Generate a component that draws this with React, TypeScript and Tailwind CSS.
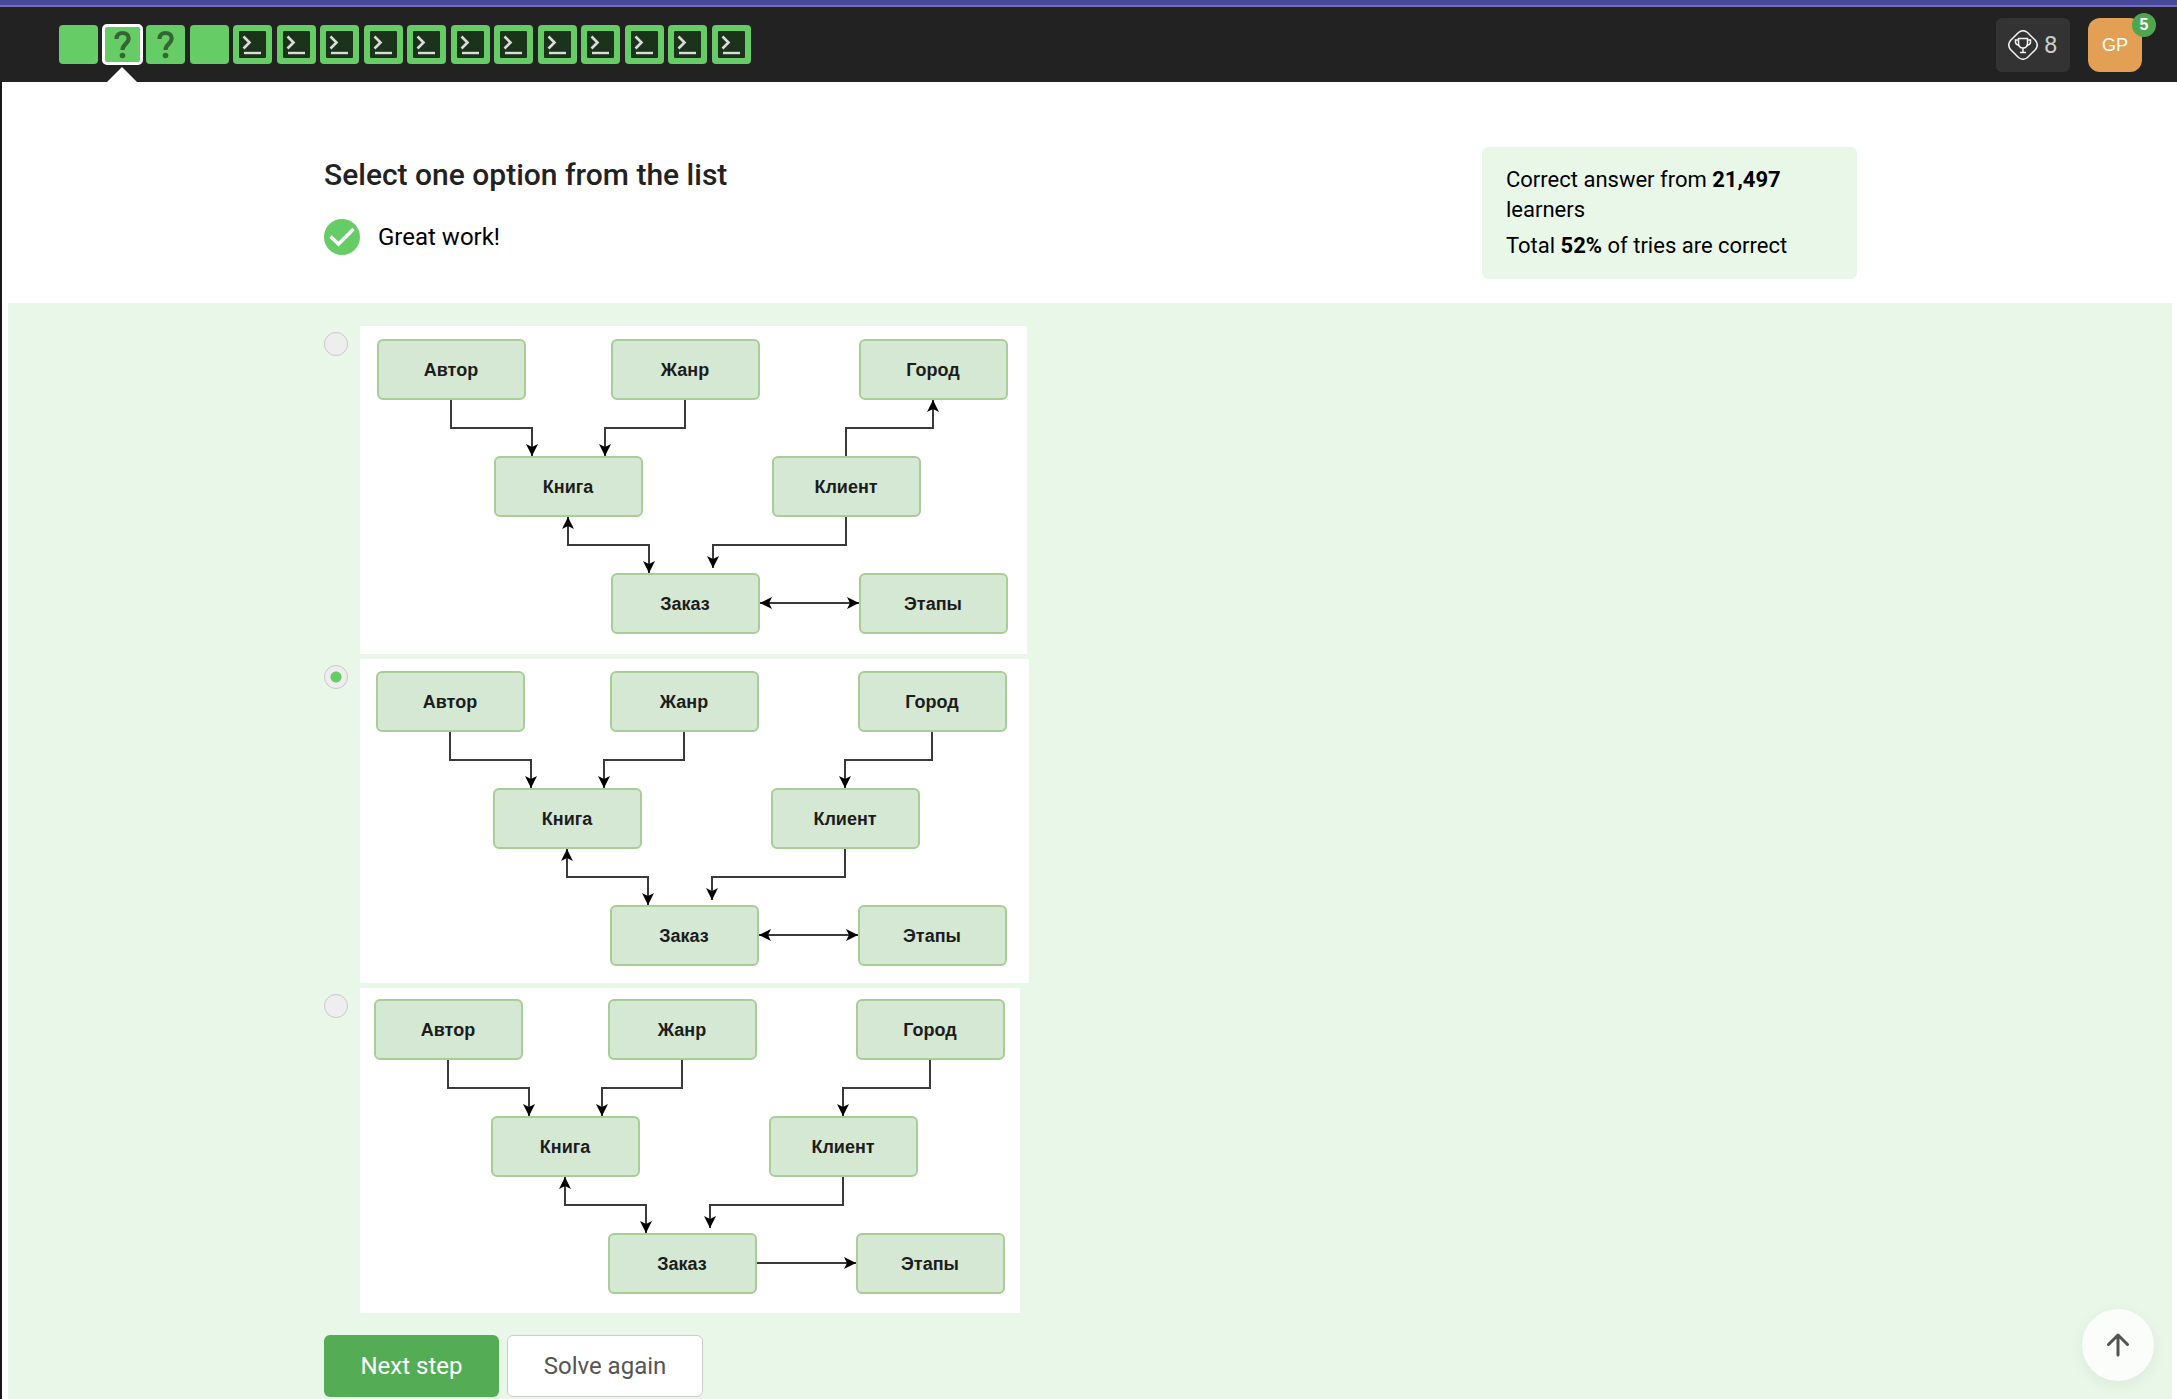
type StepKind = "text" | "quiz" | "code";

const steps: StepKind[] = [
  "text", "quiz", "quiz", "text",
  "code", "code", "code", "code", "code", "code",
  "code", "code", "code", "code", "code", "code",
];

const labels: Record<StepKind, string> = {
  text: "Theory step",
  quiz: "Quiz step",
  code: "Coding step",
};

function QuizIcon() {
  return (
    <svg viewBox="0 0 39 39" className="size-[39px] shrink-0" fill="none" aria-hidden="true">
      <path
        d="M13.5 14 C13.5 10 16 8 19.5 8 C23.5 8 25.7 10.2 25.7 13.5 C25.7 18.5 19.5 19 19.5 25"
        stroke="#336633"
        strokeWidth="4.2"
      />
      <circle cx="19.5" cy="30.5" r="2.8" fill="#336633" />
    </svg>
  );
}

function CodeIcon() {
  return (
    <svg viewBox="0 0 27 27" className="size-[27px]" fill="none" aria-hidden="true">
      <rect width="27" height="27" rx="1" fill="#1c331b" />
      <path d="M4.5 5.5 L10.5 11.5 L4.5 17.5" stroke="#dcdcdc" strokeWidth="2.6" />
      <path d="M5 22 H22" stroke="#dcdcdc" strokeWidth="2.4" />
    </svg>
  );
}

function Step({ kind, active, index }: { kind: StepKind; active: boolean; index: number }) {
  return (
    <a
      href={`#step-${index + 1}`}
      aria-label={`${labels[kind]} ${index + 1}`}
      aria-current={active ? "step" : undefined}
      className={
        active
          ? "relative flex size-[39px] items-center justify-center rounded bg-[#66cc66] outline-3 -outline-offset-2 outline-white"
          : "relative flex size-[39px] items-center justify-center rounded bg-[#66cc66]"
      }
    >
      {kind === "quiz" && <QuizIcon />}
      {kind === "code" && <CodeIcon />}
      {active && (
        <svg
          viewBox="0 0 30 15"
          className="absolute top-[42px] left-1/2 h-[15px] w-[30px] -translate-x-1/2"
          aria-hidden="true"
        >
          <path d="M0 15 L15 0 L30 15 Z" fill="#fff" />
        </svg>
      )}
    </a>
  );
}

type Diagram = {
  id: string;
  width: number;
  height: number;
  x: number;
  y: number;
  cityToClient: boolean;
  twoWayStages: boolean;
  description: string;
};

const diagrams: Diagram[] = [
  { id: "a", width: 667, height: 328, x: 18, y: 14, cityToClient: false, twoWayStages: true, description: "Клиент → Город, Заказ ↔ Этапы" },
  { id: "b", width: 669, height: 324, x: 17, y: 13, cityToClient: true, twoWayStages: true, description: "Город → Клиент, Заказ ↔ Этапы" },
  { id: "c", width: 660, height: 325, x: 15, y: 12, cityToClient: true, twoWayStages: false, description: "Город → Клиент, Заказ → Этапы" },
];

const nodes = [
  { label: "Автор", x: 0, y: 0 },
  { label: "Жанр", x: 234, y: 0 },
  { label: "Город", x: 482, y: 0 },
  { label: "Книга", x: 117, y: 117 },
  { label: "Клиент", x: 395, y: 117 },
  { label: "Заказ", x: 234, y: 234 },
  { label: "Этапы", x: 482, y: 234 },
];

function EntityDiagram({ d }: { d: Diagram }) {
  const head = `arrow-${d.id}`;
  const end = `url(#${head})`;
  return (
    <svg
      width={d.width}
      height={d.height}
      viewBox={`0 0 ${d.width} ${d.height}`}
      className="block bg-white"
      role="img"
      aria-label={d.description}
    >
      <defs>
        <marker
          id={head}
          viewBox="0 0 12 12"
          refX="12"
          refY="6"
          markerWidth="12"
          markerHeight="12"
          markerUnits="userSpaceOnUse"
          orient="auto-start-reverse"
        >
          <path d="M12 6 L0 0 L3 6 L0 12 Z" fill="#000" />
        </marker>
      </defs>
      <g transform={`translate(${d.x} ${d.y})`}>
        {nodes.map((n) => (
          <g key={n.label}>
            <rect x={n.x} y={n.y} width="147" height="59" rx="5" fill="#d5e8d4" stroke="#a9cd96" strokeWidth="2" />
            <text
              x={n.x + 73}
              y={n.y + 36}
              textAnchor="middle"
              fill="#1c1c1c"
              className="font-['Liberation_Sans',Arial,sans-serif] text-[18px] font-bold"
            >
              {n.label}
            </text>
          </g>
        ))}
        <g fill="none" stroke="#3a3a3a" strokeWidth="2">
          <path d="M73 60 V88 H154 V116" markerEnd={end} />
          <path d="M307 60 V88 H227 V116" markerEnd={end} />
          {d.cityToClient ? (
            <path d="M555 60 V88 H468 V116" markerEnd={end} />
          ) : (
            <path d="M468 116 V88 H555 V60" markerEnd={end} />
          )}
          <path d="M190 177 V205 H271 V233" markerStart={end} markerEnd={end} />
          <path d="M468 177 V205 H335 V228" markerEnd={end} />
          <path d="M382 263 H481" markerStart={d.twoWayStages ? end : undefined} markerEnd={end} />
        </g>
      </g>
    </svg>
  );
}

function TrophyIcon() {
  return (
    <svg viewBox="0 0 30 30" className="size-[30px]" fill="none" stroke="#f4f4f4" aria-hidden="true">
      <path
        d="M10.5 2.5 Q15 -1 19.5 2.5 L27.5 10.5 Q31 15 27.5 19.5 L19.5 27.5 Q15 31 10.5 27.5 L2.5 19.5 Q-1 15 2.5 10.5 Z"
        strokeWidth="1.5"
      />
      <path
        d="M10.5 8.5 H19.5 V13 C19.5 16.5 17.5 18 15 18 C12.5 18 10.5 16.5 10.5 13 Z M10.5 10 H7.5 V12 C7.5 14 9 15 11 15.5 M19.5 10 H22.5 V12 C22.5 14 21 15 19 15.5 M15 18 V22 M12 22.5 H18"
        strokeWidth="1.5"
      />
    </svg>
  );
}

export default function App() {
  return (
    <div className="flex min-h-screen flex-col bg-white font-[Roboto,sans-serif] text-black">
      <header className="border-t-[5px] border-[#49499b] bg-[#222222]">
        <div className="flex h-[77px] items-start border-t-2 border-[#7270b4] pr-[35px] pl-[59px]">
          <nav aria-label="Lesson steps" className="mt-[18px] flex w-[692px] justify-between">
            {steps.map((kind, i) => (
              <Step key={i} kind={kind} index={i} active={i === 1} />
            ))}
          </nav>
          <div className="mt-[11px] ml-auto flex gap-[18px]">
            <button type="button" className="flex h-[54px] w-[74px] items-center gap-1.5 rounded-md bg-[#333333] pl-3 text-2xl text-[#cccccc]">
              <TrophyIcon />
              8
            </button>
            <button type="button" className="relative size-[54px] rounded-xl bg-[#e39f54] font-['Liberation_Sans',Arial,sans-serif] text-lg text-white">
              GP
              <span className="absolute -top-[5px] -right-[14px] flex size-6 items-center justify-center rounded-full bg-[#4fa64f] text-base font-bold">
                5
              </span>
            </button>
          </div>
        </div>
      </header>

      <main className="flex grow flex-col border-l-2 border-[#18181a] pr-[5px] pl-1.5">
        <div className="flex items-start justify-between pt-[65px] pr-[315px] pb-6 pl-[316px]">
          <div>
            <h1 id="question" className="mt-2 text-3xl leading-10 font-medium text-[#222222]">
              Select one option from the list
            </h1>
            <p className="mt-6 flex items-center gap-[18px] text-2xl leading-9">
              <svg viewBox="0 0 36 36" className="size-9" fill="none" aria-hidden="true">
                <circle cx="18" cy="18" r="18" fill="#66cc66" />
                <path d="M6.5 17.5 L14.5 25 L29.5 10" stroke="#fff" strokeWidth="3.5" />
              </svg>
              Great work!
            </p>
          </div>
          <aside className="flex w-[375px] flex-col gap-1.5 rounded-md bg-[#e9f7e9] px-6 py-[18px] text-[22px] leading-[30px]">
            <p>
              Correct answer from <b>21,497</b> learners
            </p>
            <p>
              Total <b>52%</b> of tries are correct
            </p>
          </aside>
        </div>

        <form className="grow bg-[#e9f7e9] pt-[23px] pl-[316px]" onSubmit={(e) => e.preventDefault()}>
          <fieldset aria-labelledby="question" className="flex flex-col gap-[5px]">
            {diagrams.map((d) => (
              <label key={d.id} className="flex items-start gap-3">
                <input
                  type="radio"
                  name="schema"
                  value={d.id}
                  defaultChecked={d.id === "b"}
                  className="mt-1.5 size-6 appearance-none rounded-full border border-[#c8c8c8] bg-[#eeeeee] checked:bg-[radial-gradient(circle,#66cc66_5px,#eeeeee_6px)]"
                />
                <EntityDiagram d={d} />
              </label>
            ))}
          </fieldset>
          <div className="mt-[22px] flex gap-2 pb-0.5 text-2xl">
            <button type="submit" className="h-[62px] w-[175px] rounded-md bg-[#54ad54] text-white">
              Next step
            </button>
            <button type="reset" className="h-[62px] w-[196px] rounded-md border border-[#cccccc] bg-white text-[#555555]">
              Solve again
            </button>
          </div>
        </form>
      </main>

      <button
        type="button"
        aria-label="Scroll to top"
        className="fixed right-[23px] bottom-[18px] flex size-[72px] items-center justify-center rounded-full bg-[#fbfdfb] shadow-[0_4px_16px_rgba(0,0,0,0.06)]"
      >
        <svg viewBox="0 0 24 24" className="size-6" fill="none" stroke="#535353" strokeWidth="3" strokeLinecap="round" strokeLinejoin="round" aria-hidden="true">
          <path d="M12 22 V2 M2.5 11.5 L12 2 L21.5 11.5" />
        </svg>
      </button>
    </div>
  );
}
